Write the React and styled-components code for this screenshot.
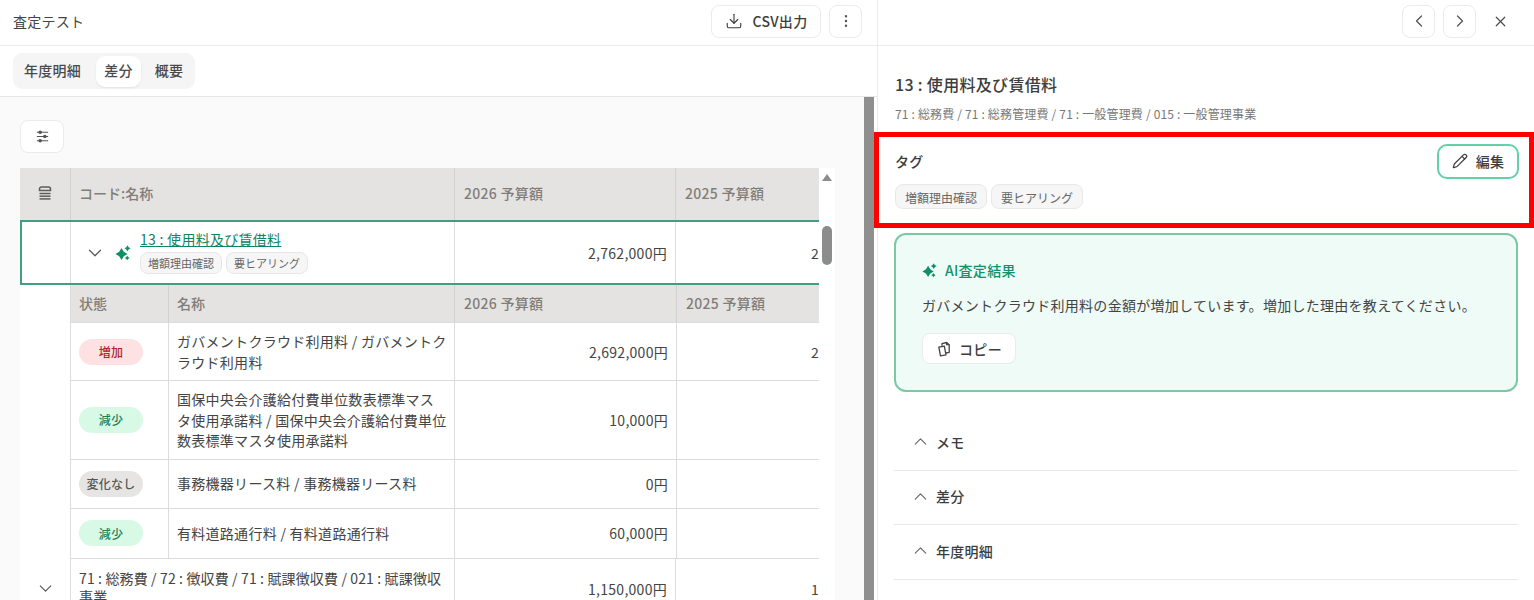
import React from "react";
import styled, { createGlobalStyle } from "styled-components";
import {
  ChevronDown,
  ChevronLeft,
  ChevronRight,
  ChevronUp,
  Download,
  EllipsisVertical,
  Pencil,
  X,
} from "lucide-react";

const GlobalStyle = createGlobalStyle`
  html, body {
    margin: 0;
    height: 600px;
    overflow: hidden;
    background: #fff;
    font-family: "Noto Sans CJK JP", "Noto Sans", sans-serif;
    color: #444;
  }
  * {
    box-sizing: border-box;
    letter-spacing: 0.02em;
  }
`;

const Sparkle = ({ size = 16 }) => (
  <svg width={size} height={size} viewBox="0 0 16 16" fill="#0f8f68">
    <path d="M6.500 3 8.800 6.700 12.500 9 8.800 11.300 6.500 15 4.200 11.300 0.500 9 4.200 6.700Z" />
    <path d="M12.500 0.200 13.600 2.200 15.600 3.300 13.600 4.400 12.500 6.400 11.400 4.400 9.400 3.300 11.400 2.200Z" />
    <path d="M12.200 10.700 13.100 12.100 14.500 13 13.100 13.900 12.200 15.300 11.300 13.900 9.900 13 11.300 12.100Z" />
  </svg>
);

const StackIcon = () => (
  <svg width="16" height="16" viewBox="0 0 16 16" fill="none" stroke="#5c5c5c" strokeWidth="1.500">
    <path d="M2.500 5.500V4a2 2 0 0 1 2-2h7a2 2 0 0 1 2 2v1.500Z" />
    <path d="M2.500 8.500h11" />
    <path d="M2.500 11.200h11" />
    <path d="M2.500 13.900h11" />
  </svg>
);

const TuneIcon = () => (
  <svg width="15" height="15" viewBox="0 0 16 16" fill="#555" stroke="#555" strokeWidth="1.200">
    <path d="M2 3.500h12M2 8h12M2 12.500h12" />
    <circle cx="5.500" cy="3.500" r="1.300" />
    <circle cx="10.500" cy="8" r="1.300" />
    <circle cx="5.500" cy="12.500" r="1.300" />
  </svg>
);

const CopyIcon = () => (
  <svg width="16" height="16" viewBox="0 0 16 16" fill="none" stroke="#444" strokeWidth="1.300" strokeLinejoin="round">
    <path d="M2.800 6.200 8.300 5.200 10 13.800 4.500 14.800Z" />
    <path d="M6 4.800 6 2.600 10.600 1.500 13.200 3.700 13.200 11.300 10 12" />
    <path d="M10.600 1.500V3.700H13.200" />
  </svg>
);

const rows = [
  { status: "増加", tone: "up", name: "ガバメントクラウド利用料 / ガバメントクラウド利用料", amount: "2,692,000円", prev: "2" },
  { status: "減少", tone: "down", name: "国保中央会介護給付費単位数表標準マスタ使用承諾料 / 国保中央会介護給付費単位数表標準マスタ使用承諾料", amount: "10,000円", prev: "" },
  { status: "変化なし", tone: "flat", name: "事務機器リース料 / 事務機器リース料", amount: "0円", prev: "" },
  { status: "減少", tone: "down", name: "有料道路通行料 / 有料道路通行料", amount: "60,000円", prev: "" },
];

const App = () => {
  return (
    <Shell>
      <GlobalStyle />
      <LeftPane>
        <TopBar>
          <PageTitle>査定テスト</PageTitle>
          <TopActions>
            <CsvButton>
              <Download size={18} strokeWidth={1.5} />
              CSV出力
            </CsvButton>
            <IconButton>
              <EllipsisVertical size={16} strokeWidth={1.7} />
            </IconButton>
          </TopActions>
        </TopBar>
        <TabBar>
          <Tabs>
            <Tab>年度明細</Tab>
            <Tab $active>差分</Tab>
            <Tab>概要</Tab>
          </Tabs>
        </TabBar>
        <Body>
          <Main>
            <FilterButton>
              <TuneIcon />
            </FilterButton>
            <TableArea>
              <Table>
                <HeadRow>
                  <HeadCell $center>
                    <StackIcon />
                  </HeadCell>
                  <HeadCell $text>コード:名称</HeadCell>
                  <HeadCell>2026 予算額</HeadCell>
                  <HeadCell $last>2025 予算額</HeadCell>
                </HeadRow>
                <SelectedRow>
                  <Cell />
                  <Cell>
                    <RowToggle>
                      <ChevronDown size={22} strokeWidth={1.3} />
                    </RowToggle>
                    <SparkleSlot>
                      <Sparkle />
                    </SparkleSlot>
                    <CodeBlock>
                      <CodeLink>13 : 使用料及び賃借料</CodeLink>
                      <TagRow>
                        <SmallTag>増額理由確認</SmallTag>
                        <SmallTag>要ヒアリング</SmallTag>
                      </TagRow>
                    </CodeBlock>
                  </Cell>
                  <AmountCell>2,762,000円</AmountCell>
                  <AmountCell $last>2</AmountCell>
                </SelectedRow>
                <Detail>
                  <DetailGutter />
                  <div>
                    <SubHead>
                      <HeadCell $text>状態</HeadCell>
                      <HeadCell $text>名称</HeadCell>
                      <HeadCell>2026 予算額</HeadCell>
                      <HeadCell $last>2025 予算額</HeadCell>
                    </SubHead>
                    {rows.map((row) => (
                      <SubRow key={row.name}>
                        <Cell>
                          <Badge $tone={row.tone}>{row.status}</Badge>
                        </Cell>
                        <NameCell>{row.name}</NameCell>
                        <AmountCell>{row.amount}</AmountCell>
                        <AmountCell $last>{row.prev}</AmountCell>
                      </SubRow>
                    ))}
                  </div>
                </Detail>
                <BodyRow>
                  <Cell $center>
                    <ChevronDown size={21} strokeWidth={1.3} />
                  </Cell>
                  <PathCell>71 : 総務費 / 72 : 徴収費 / 71 : 賦課徴収費 / 021 : 賦課徴収事業</PathCell>
                  <AmountCell>1,150,000円</AmountCell>
                  <AmountCell $last>1</AmountCell>
                </BodyRow>
              </Table>
              <TableScroll>
                <ArrowUp />
                <Thumb />
              </TableScroll>
            </TableArea>
          </Main>
          <PageScrollbar />
        </Body>
      </LeftPane>

      <RightPane>
        <PaneBar>
          <IconButton>
            <ChevronLeft size={20} strokeWidth={1.5} />
          </IconButton>
          <IconButton>
            <ChevronRight size={20} strokeWidth={1.5} />
          </IconButton>
          <CloseButton>
            <X size={17} strokeWidth={1.7} />
          </CloseButton>
        </PaneBar>
        <PaneBody>
          <DetailTitle>13 : 使用料及び賃借料</DetailTitle>
          <Breadcrumb>71 : 総務費 / 71 : 総務管理費 / 71 : 一般管理費 / 015 : 一般管理事業</Breadcrumb>
          <TagSection>
            <Highlight />
            <TagHead>
              <SectionLabel>タグ</SectionLabel>
              <EditButton>
                <Pencil size={16} strokeWidth={1.8} />
                編集
              </EditButton>
            </TagHead>
            <TagList>
              <Tag>増額理由確認</Tag>
              <Tag>要ヒアリング</Tag>
            </TagList>
          </TagSection>
          <AiCard>
            <AiHeading>
              <Sparkle size={15} />
              AI査定結果
            </AiHeading>
            <AiText>ガバメントクラウド利用料の金額が増加しています。増加した理由を教えてください。</AiText>
            <CopyButton>
              <CopyIcon />
              コピー
            </CopyButton>
          </AiCard>
          <Accordion>
            {["メモ", "差分", "年度明細"].map((label) => (
              <AccordionRow key={label}>
                <ChevronUp size={21} strokeWidth={1.3} />
                {label}
              </AccordionRow>
            ))}
          </Accordion>
        </PaneBody>
      </RightPane>
    </Shell>
  );
};

const Shell = styled.div`
  display: flex;
  width: 1534px;
  height: 600px;
  overflow: hidden;
`;

const LeftPane = styled.section`
  width: 878px;
  flex-shrink: 0;
  display: flex;
  flex-direction: column;
  border-right: 1px solid #eceded;
`;

const TopBar = styled.header`
  height: 46px;
  flex-shrink: 0;
  display: flex;
  align-items: center;
  justify-content: space-between;
  padding: 0 15px 3px 13px;
  border-bottom: 1px solid #ebebeb;
`;

const PageTitle = styled.h1`
  margin: 0;
  font-size: 14px;
  font-weight: 400;
  color: #444;
`;

const TopActions = styled.div`
  display: flex;
  gap: 8px;
`;

const CsvButton = styled.button`
  width: 110px;
  height: 33px;
  display: flex;
  align-items: center;
  justify-content: center;
  gap: 10px;
  padding: 0;
  font: 500 14px "Noto Sans CJK JP", sans-serif;
  color: #3d3d3d;
  background: #fff;
  border: 1px solid #ebebeb;
  border-radius: 8px;
`;

const IconButton = styled.button`
  width: 33px;
  height: 33px;
  display: flex;
  align-items: center;
  justify-content: center;
  padding: 0;
  color: #555;
  background: #fff;
  border: 1px solid #ebebeb;
  border-radius: 8px;
`;

const TabBar = styled.div`
  height: 51px;
  flex-shrink: 0;
  padding-top: 7px;
  padding-left: 13px;
  border-bottom: 1px solid #e6e6e6;
`;

const Tabs = styled.div`
  display: inline-flex;
  align-items: center;
  height: 36px;
  padding: 0 3px;
  background: #f5f5f5;
  border-radius: 9px;
`;

const Tab = styled.div`
  height: 31px;
  display: flex;
  align-items: center;
  padding: 0 8px 2px;
  font-size: 14px;
  font-weight: 500;
  color: #4a4a4a;
  background: ${(p) => (p.$active ? "#fff" : "transparent")};
  border-radius: 9px;
  box-shadow: ${(p) => (p.$active ? "0 1px 2px rgba(0,0,0,0.08)" : "none")};
  &:first-child {
    padding: 0 15px 2px 8px;
  }
  &:last-child {
    padding: 0 9px 2px 14px;
  }
`;

const Body = styled.div`
  flex: 1;
  min-height: 0;
  display: flex;
  padding-right: 3px;
`;

const Main = styled.main`
  flex: 1;
  min-width: 0;
  padding: 23px 0 0 20px;
  background: #fafafa;
`;

const FilterButton = styled.button`
  width: 44px;
  height: 33px;
  display: flex;
  align-items: center;
  justify-content: center;
  padding: 0;
  background: #fff;
  border: 1px solid #ebebeb;
  border-radius: 8px;
`;

const TableArea = styled.div`
  display: flex;
  margin-top: 15px;
`;

const Table = styled.div`
  width: 799px;
  flex-shrink: 0;
  background: #fff;
  font-size: 14px;
`;

const HeadRow = styled.div`
  display: grid;
  grid-template-columns: 51px 384px 221px 143px;
  height: 52px;
  background: #e5e3e1;
`;

const HeadCell = styled.div`
  display: flex;
  align-items: center;
  justify-content: ${(p) => (p.$center ? "center" : "flex-start")};
  padding: 0 0 2px ${(p) => (p.$center ? "0" : p.$text ? "8px" : "9px")};
  font-size: 14px;
  font-weight: 500;
  color: #827d78;
  letter-spacing: ${(p) => (p.$text ? "0" : "0.02em")};
  border-right: ${(p) => (p.$last ? "none" : "1px solid #d3d2d0")};
`;

const Cell = styled.div`
  display: flex;
  align-items: center;
  justify-content: ${(p) => (p.$center ? "center" : "flex-start")};
  padding-left: ${(p) => (p.$center ? "0" : "8px")};
  color: #555;
  border-right: 1px solid #dcdcdc;
`;

const AmountCell = styled.div`
  display: flex;
  align-items: center;
  justify-content: flex-end;
  padding-right: ${(p) => (p.$last ? "0" : "8px")};
  color: #444;
  border-right: ${(p) => (p.$last ? "none" : "1px solid #dcdcdc")};
`;

const SelectedRow = styled.div`
  display: grid;
  grid-template-columns: 49px 384px 221px 143px;
  height: 65px;
  border: 2px solid #3f9f80;
  border-right: none;
`;

const RowToggle = styled.span`
  display: flex;
  margin-left: 5px;
  color: #555;
`;

const SparkleSlot = styled.span`
  display: flex;
  margin-left: 9px;
`;

const CodeBlock = styled.div`
  margin-left: 9px;
  margin-top: -3px;
`;

const CodeLink = styled.div`
  font-size: 14px;
  line-height: 20px;
  color: #0f8366;
  text-decoration: underline;
`;

const TagRow = styled.div`
  display: flex;
  gap: 4px;
  margin-top: 3px;
`;

const SmallTag = styled.span`
  height: 22px;
  display: flex;
  align-items: center;
  padding: 0 7px;
  font-size: 11px;
  letter-spacing: 0;
  color: #666;
  background: #f6f6f6;
  border: 1px solid #e6e6e6;
  border-radius: 8px;
`;

const Detail = styled.div`
  display: grid;
  grid-template-columns: 51px 748px;
`;

const DetailGutter = styled.div`
  background: #fff;
  border-right: 1px solid #dcdcdc;
`;

const SubHead = styled.div`
  display: grid;
  grid-template-columns: 98px 286px 222px 142px;
  height: 38px;
  background: #e5e3e1;
  border-bottom: 1px solid #dcdcdc;
`;

const SubRow = styled.div`
  display: grid;
  grid-template-columns: 98px 286px 222px 142px;
  min-height: 49px;
  border-bottom: 1px solid #dcdcdc;
  &:last-child {
    min-height: 50px;
  }
`;

const NameCell = styled.div`
  display: flex;
  align-items: center;
  padding: 8px 6px 8px 8px;
  line-height: 20.500px;
  color: #444;
  border-right: 1px solid #dcdcdc;
`;

const badgeTones = {
  up: "background: #fde1e3; color: #b3242c;",
  down: "background: #d9f9e7; color: #1c7f57;",
  flat: "background: #e6e5e4; color: #555;",
};

const Badge = styled.span`
  width: 64px;
  height: 26px;
  display: flex;
  align-items: center;
  justify-content: center;
  font-size: 12px;
  font-weight: 500;
  border-radius: 13px;
  ${(p) => badgeTones[p.$tone]}
`;

const BodyRow = styled.div`
  display: grid;
  grid-template-columns: 51px 384px 221px 143px;
  height: 60px;
`;

const PathCell = styled.div`
  display: flex;
  align-items: center;
  padding: 0 4px 4px 8px;
  line-height: 18px;
  font-size: 14px;
  letter-spacing: 0.01em;
  color: #444;
  border-right: 1px solid #dcdcdc;
`;

const TableScroll = styled.div`
  width: 16px;
  display: flex;
  flex-direction: column;
  align-items: center;
  padding-top: 6px;
  background: #fff;
`;

const ArrowUp = styled.div`
  width: 0;
  height: 0;
  border-left: 5px solid transparent;
  border-right: 5px solid transparent;
  border-bottom: 7px solid #8c8c8c;
`;

const Thumb = styled.div`
  width: 10px;
  height: 39px;
  margin-top: 45px;
  background: #8c8c8c;
  border-radius: 5px;
`;

const PageScrollbar = styled.div`
  width: 10px;
  flex-shrink: 0;
  background: #8f8f8f;
`;

const RightPane = styled.section`
  flex: 1;
  min-width: 0;
  display: flex;
  flex-direction: column;
`;

const PaneBar = styled.div`
  height: 46px;
  flex-shrink: 0;
  display: flex;
  align-items: center;
  justify-content: flex-end;
  gap: 8px;
  padding: 0 17px 3px 0;
  border-bottom: 1px solid #ebebeb;
`;

const CloseButton = styled.button`
  width: 33px;
  height: 33px;
  display: flex;
  align-items: center;
  justify-content: center;
  padding: 0;
  color: #4a4a4a;
  background: none;
  border: none;
`;

const PaneBody = styled.div`
  flex: 1;
  padding: 26px 16px 0;
`;

const DetailTitle = styled.h2`
  margin: 0 0 0 1px;
  font-size: 16px;
  line-height: 24px;
  font-weight: 500;
  color: #3d3d3d;
`;

const Breadcrumb = styled.div`
  margin: 9px 0 0 1px;
  font-size: 12px;
  line-height: 18px;
  letter-spacing: 0.17px;
  color: #777;
`;

const TagSection = styled.div`
  position: relative;
  margin-top: 21px;
`;

const Highlight = styled.div`
  position: absolute;
  top: -12px;
  left: -20px;
  right: -16px;
  height: 96px;
  border: 5px solid #f00;
  pointer-events: none;
`;

const TagHead = styled.div`
  display: flex;
  align-items: center;
  justify-content: space-between;
  height: 35px;
`;

const SectionLabel = styled.span`
  margin-left: 1px;
  padding-bottom: 2px;
  font-size: 14px;
  font-weight: 500;
  color: #3d3d3d;
`;

const EditButton = styled.button`
  width: 82px;
  height: 35px;
  display: flex;
  align-items: center;
  justify-content: center;
  gap: 8px;
  margin-right: -1px;
  padding: 0 0 2px;
  font: 500 14px "Noto Sans CJK JP", sans-serif;
  color: #3d3d3d;
  background: #fff;
  border: 2px solid #63d0a8;
  border-radius: 10px;
`;

const TagList = styled.div`
  display: flex;
  gap: 4px;
  margin: 5px 0 0 1px;
`;

const Tag = styled.span`
  height: 25px;
  display: flex;
  align-items: center;
  padding: 1px 9px 0;
  font-size: 12px;
  letter-spacing: 0;
  color: #666;
  background: #f6f6f6;
  border: 1px solid #e8e8e8;
  border-radius: 8px;
`;

const AiCard = styled.div`
  margin-top: 24px;
  height: 159px;
  padding: 25px 26px 0;
  background: #effbf6;
  border: 2px solid #7cc8a5;
  border-radius: 12px;
`;

const AiHeading = styled.div`
  display: flex;
  align-items: center;
  gap: 8px;
  height: 20px;
  font-size: 14px;
  font-weight: 500;
  color: #12926b;
`;

const AiText = styled.p`
  margin: 15px 0 0;
  font-size: 14px;
  line-height: 20px;
  color: #444;
`;

const CopyButton = styled.button`
  width: 94px;
  height: 31px;
  display: flex;
  align-items: center;
  justify-content: center;
  gap: 7px;
  margin-top: 18px;
  padding: 0;
  font: 500 14px "Noto Sans CJK JP", sans-serif;
  color: #3d3d3d;
  background: #fff;
  border: 1px solid #ebebeb;
  border-radius: 8px;
`;

const Accordion = styled.div`
  margin-top: 24px;
`;

const AccordionRow = styled.div`
  height: 54.500px;
  display: flex;
  align-items: center;
  gap: 5px;
  padding: 0 0 2px 16px;
  font-size: 14px;
  font-weight: 500;
  color: #3d3d3d;
  border-bottom: 1px solid #e8e8e8;
  svg {
    color: #666;
  }
`;

export default App;
